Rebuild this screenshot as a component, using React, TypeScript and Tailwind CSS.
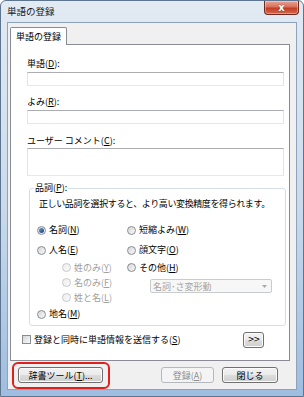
import React from "react";

function Radio({ checked, disabled }: { checked?: boolean; disabled?: boolean }) {
  return (
    <span
      className={`w-[9px] h-[9px] rounded-full border flex items-center justify-center shrink-0 ${
        disabled
          ? "border-[#c5c7c9] bg-gradient-to-br from-[#eeeeee] to-[#fafafa]"
          : "border-[#8a8d90] bg-gradient-to-br from-[#d5d6d8] to-[#f9f9f9]"
      }`}
    >
      {checked && (
        <span className="w-[5px] h-[5px] rounded-full bg-gradient-to-br from-[#6f9dd6] to-[#153c78]" />
      )}
    </span>
  );
}

function U({ children }: { children: React.ReactNode }) {
  return <span className="underline underline-offset-[1px]">{children}</span>;
}

function Btn({
  children,
  className,
  disabled,
}: {
  children: React.ReactNode;
  className?: string;
  disabled?: boolean;
}) {
  return (
    <div
      className={`h-[16px] flex items-center justify-center rounded-[3px] border leading-none ${
        disabled
          ? "border-[#b5b9bd] bg-[#f4f4f4] text-[#8d8d8d]"
          : "border-[#707070] bg-[linear-gradient(#f2f2f2_0%,#ebebeb_50%,#dddddd_50%,#cfcfcf_100%)] shadow-[inset_0_0_0_1px_#fbfbfb]"
      } ${className ?? ""}`}
    >
      {children}
    </div>
  );
}

function Input({ className }: { className?: string }) {
  return (
    <div
      className={`bg-white border border-[#e2e3ea] border-t-[#abadb3] border-b-[#e3e9ef] ${className ?? ""}`}
    />
  );
}

export default function App() {
  return (
    <div className="w-[304px] h-[397px] relative overflow-hidden font-['Noto_Sans_CJK_JP',sans-serif] text-[9px] text-black">
      <div className="w-full h-full flex flex-col rounded-t-[6px] border border-[#5e7590] bg-gradient-to-b from-[#e2eaf3] via-[#cbdbec] to-[#9fbde0] px-[6px] pb-[6px]">
        {/* title bar */}
        <div className="h-[21px] shrink-0 flex items-start justify-between">
          <span className="mt-[4px] text-[9.5px] leading-[12px] text-[#1b1b1b]">単語の登録</span>
          <div className="-mr-[2px] w-[35px] h-[14px] rounded-b-[4px] border border-t-0 border-[#6e2a1f] bg-[linear-gradient(#e8a595_0%,#d8715c_45%,#c23e25_55%,#d4664c_100%)] flex items-center justify-center shadow-[inset_0_0_0_1px_rgba(255,255,255,0.35)]">
            <span className="text-white text-[10px] font-bold leading-none font-['DejaVu_Sans',sans-serif] [text-shadow:0_0_1px_#5a1a10]">x</span>
          </div>
        </div>

        {/* client area */}
        <div className="flex-1 flex flex-col bg-[#f0f0f0] border border-[#8da2bb] pt-[4px] pl-[2px] pr-[6px]">
          {/* tab header */}
          <div className="h-[17px] shrink-0 flex">
            <div className="h-[18px] px-[5px] bg-white border border-b-0 border-[#898c95] rounded-t-[2px] flex items-center leading-none relative z-10">
              単語の登録
            </div>
          </div>

          {/* tab panel */}
          <div className="h-[317px] shrink-0 bg-white border border-[#898c95] pl-[16px] pr-[5px] pt-[13px] flex flex-col">
            <div className="h-[12px] leading-[12px]">
              単語(<U>D</U>):
            </div>
            <Input className="mt-[2px] h-[14px]" />
            <div className="mt-[10px] h-[12px] leading-[12px]">
              よみ(<U>R</U>):
            </div>
            <Input className="mt-[2px] h-[14px]" />
            <div className="mt-[11px] h-[12px] leading-[12px]">
              ユーザー コメント(<U>C</U>):
            </div>
            <Input className="mt-[1px] h-[28px]" />

            {/* group box */}
            <fieldset className="mt-[6px] ml-[2px] w-[257px] h-[144px] border border-[#d5dfe5] rounded-[3px] pl-[9px] pr-[4px]">
              <legend className="-ml-[5px] px-[1px] h-[12px] leading-[12px]">
                品詞(<U>P</U>):
              </legend>
              <div className="mt-[4px] h-[12px] leading-[12px] tracking-[-0.4px]">
                正しい品詞を選択すると、より高い変換精度を得られます。
              </div>

              <div className="mt-[10px] flex">
                {/* left column */}
                <div className="w-[90px] -ml-[2px] flex flex-col">
                  <div className="h-[20px] flex items-center gap-[3px]">
                    <Radio checked />
                    <span>
                      名詞(<U>N</U>)
                    </span>
                  </div>
                  <div className="h-[20px] flex items-center gap-[3px]">
                    <Radio />
                    <span>
                      人名(<U>E</U>)
                    </span>
                  </div>
                  <div className="pl-[25px] flex flex-col text-[#a0a0a0]">
                    <div className="h-[15px] flex items-center gap-[3px]">
                      <Radio disabled />
                      <span>
                        姓のみ(<U>Y</U>)
                      </span>
                    </div>
                    <div className="h-[15px] flex items-center gap-[3px]">
                      <Radio disabled />
                      <span>
                        名のみ(<U>F</U>)
                      </span>
                    </div>
                    <div className="h-[15px] flex items-center gap-[3px]">
                      <Radio disabled />
                      <span>
                        姓と名(<U>L</U>)
                      </span>
                    </div>
                  </div>
                  <div className="mt-[2px] h-[14px] flex items-center gap-[3px]">
                    <Radio />
                    <span>
                      地名(<U>M</U>)
                    </span>
                  </div>
                </div>

                {/* right column */}
                <div className="flex flex-col">
                  <div className="h-[20px] flex items-center gap-[3px]">
                    <Radio />
                    <span>
                      短縮よみ(<U>W</U>)
                    </span>
                  </div>
                  <div className="h-[20px] flex items-center gap-[3px]">
                    <Radio />
                    <span>
                      顔文字(<U>O</U>)
                    </span>
                  </div>
                  <div className="h-[15px] flex items-center gap-[3px]">
                    <Radio />
                    <span>
                      その他(<U>H</U>)
                    </span>
                  </div>
                  <div className="mt-[4px] ml-[23px] w-[122px] h-[14px] border border-[#c9cccf] bg-[#f7f7f7] rounded-[2px] flex items-center justify-between pl-[2px] pr-[4px] text-[#a3a3a3]">
                    <span className="leading-none">名詞･さ変形動</span>
                    <svg width="5" height="3" viewBox="0 0 5 3">
                      <path d="M0 0 L5 0 L2.5 3 Z" fill="#a8a8a8" />
                    </svg>
                  </div>
                </div>
              </div>
            </fieldset>

            {/* checkbox row */}
            <div className="mt-[6px] h-[15px] flex items-center justify-between pr-[20px]">
              <div className="-ml-[5px] flex items-center gap-[3px]">
                <span className="w-[9px] h-[9px] border border-[#8a8d90] bg-gradient-to-br from-[#d5d6d8] to-[#f9f9f9]" />
                <span>
                  登録と同時に単語情報を送信する(<U>S</U>)
                </span>
              </div>
              <Btn className="w-[21px] h-[15px]">
                <span className="text-[8px] font-['DejaVu_Sans',sans-serif] tracking-[-1px]">&gt;&gt;</span>
              </Btn>
            </div>
          </div>

          {/* bottom buttons */}
          <div className="mt-[6px] flex items-center pl-[8px] pr-[12px]">
            <Btn className="w-[85px]">
              辞書ツール(<U>T</U>)...
            </Btn>
            <div className="flex-1" />
            <Btn className="w-[53px]" disabled>
              登録(<U>A</U>)
            </Btn>
            <Btn className="ml-[8px] w-[56px]">閉じる</Btn>
          </div>
        </div>
      </div>

      {/* red annotation highlight */}
      <div className="absolute left-[12px] top-[362px] w-[98px] h-[27px] border-2 border-[#e0201c] rounded-[6px] pointer-events-none" />
    </div>
  );
}
